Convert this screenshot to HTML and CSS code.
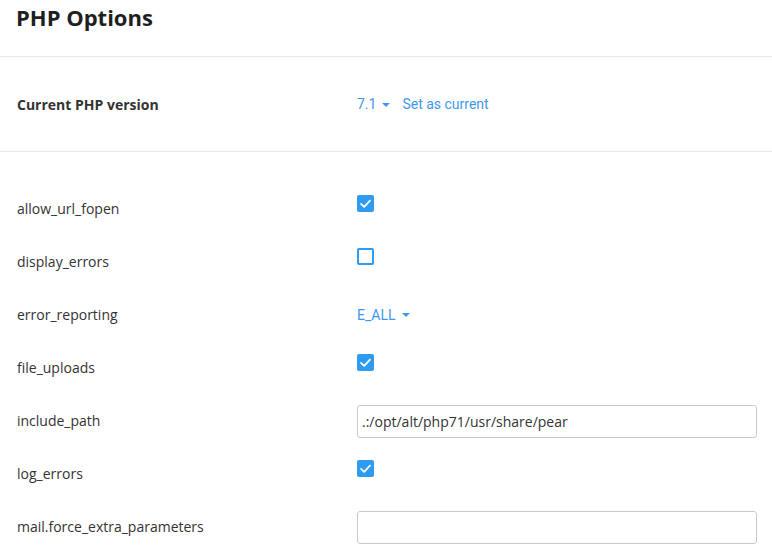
FILE: index.html
```html
<!DOCTYPE html>
<html>
<head>
<meta charset="utf-8">
<link rel="stylesheet" href="styles.css">
</head>
<body>
<div class="page">
  <h1 class="title">PHP Options</h1>
  <div class="version-row">
    <div class="label-bold">Current PHP version</div>
    <div class="control">
      <span class="link">7.1</span><span class="caret"></span>
      <span class="link set">Set as current</span>
    </div>
  </div>
  <div class="options">
    <div class="row">
      <div class="label">allow_url_fopen</div>
      <div class="control"><span class="cb checked"><svg viewBox="0 0 17 17" width="17" height="17"><path d="M4 8.8 L7.2 11.8 L13 5.6" fill="none" stroke="#fff" stroke-width="1.7" stroke-linecap="round" stroke-linejoin="round"/></svg></span></div>
    </div>
    <div class="row">
      <div class="label">display_errors</div>
      <div class="control"><span class="cb"></span></div>
    </div>
    <div class="row">
      <div class="label">error_reporting</div>
      <div class="control"><span class="link">E_ALL</span><span class="caret"></span></div>
    </div>
    <div class="row">
      <div class="label">file_uploads</div>
      <div class="control"><span class="cb checked"><svg viewBox="0 0 17 17" width="17" height="17"><path d="M4 8.8 L7.2 11.8 L13 5.6" fill="none" stroke="#fff" stroke-width="1.7" stroke-linecap="round" stroke-linejoin="round"/></svg></span></div>
    </div>
    <div class="row">
      <div class="label">include_path</div>
      <div class="control"><input class="text-input" type="text" value=".:/opt/alt/php71/usr/share/pear"></div>
    </div>
    <div class="row">
      <div class="label">log_errors</div>
      <div class="control"><span class="cb checked"><svg viewBox="0 0 17 17" width="17" height="17"><path d="M4 8.8 L7.2 11.8 L13 5.6" fill="none" stroke="#fff" stroke-width="1.7" stroke-linecap="round" stroke-linejoin="round"/></svg></span></div>
    </div>
    <div class="row">
      <div class="label">mail.force_extra_parameters</div>
      <div class="control"><input class="text-input" type="text" value=""></div>
    </div>
  </div>
</div>
</body>
</html>
```
FILE: styles.css
```css
* { box-sizing: border-box; }
html, body { margin: 0; padding: 0; background: #fff; }
body {
  font-family: "Open Sans", "Noto Sans", sans-serif;
  color: #333;
  overflow: hidden;
}
.page { width: 772px; }
.title {
  margin: 0;
  padding: 2px 16px 0;
  height: 57px;
  font-size: 22px;
  font-weight: 700;
  line-height: 30px;
  color: #1f1f1f;
  border-bottom: 1px solid #e8e8e8;
}
.version-row {
  display: grid;
  grid-template-columns: 340px 1fr;
  align-items: center;
  height: 95px;
  padding: 0 15px 0 17px;
  border-bottom: 1px solid #e8e8e8;
}
.label-bold {
  font-size: 14px;
  font-weight: 700;
  color: #333;
}
.options { padding-top: 30px; }
.row {
  display: grid;
  grid-template-columns: 340px 1fr;
  align-items: center;
  height: 53px;
  padding: 0 15px 0 17px;
}
.label { font-size: 14px; color: #333; }
.control {
  display: flex;
  align-items: center;
}
.link {
  font-family: Roboto, "Noto Sans", sans-serif;
  font-size: 14px;
  color: #3d98ee;
}
.caret {
  width: 0; height: 0;
  border-left: 4px solid transparent;
  border-right: 4px solid transparent;
  border-top: 4px solid #3d98ee;
  margin-left: 6px;
  margin-top: 1px;
}
.set { margin-left: 12px; }
.cb {
  width: 17px; height: 17px;
  border-radius: 2px;
  border: 2px solid #2f9bf0;
  background: #fff;
  display: flex;
  margin-top: -11px;
}
.cb.checked { background: #2f9bf0; border: none; }
.text-input {
  width: 400px;
  height: 33px;
  margin-top: 2px;
  border: 1px solid #c9c9c9;
  border-radius: 3px;
  padding: 0 4px;
  font-family: "Open Sans", "Noto Sans", sans-serif;
  font-size: 14px;
  color: #333;
  outline: none;
  background: #fff;
}
```
